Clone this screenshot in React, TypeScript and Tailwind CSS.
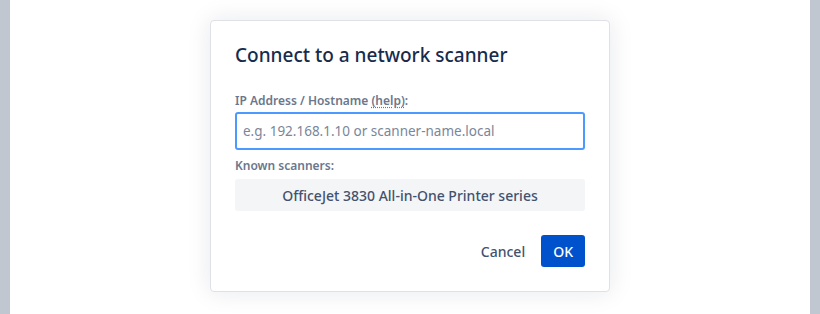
import React from "react";

const App = () => {
  return (
    <div className="flex h-[314px] w-[820px] bg-[#c1c7d0] px-[10px] font-['Noto_Sans',sans-serif]">
      <div className="flex flex-1 justify-center bg-white pt-[20px]">
        <div className="flex h-[272px] w-[400px] flex-col rounded-[4px] border border-[#dfe1e6] bg-white px-[24px] pt-[18px] shadow-[0_0_24px_rgba(9,30,66,0.10)]">
          <h2 className="text-[19px] font-medium leading-[32px] text-[#172b4d]">
            Connect to a network scanner
          </h2>
          <label className="mt-[22px] text-[12px] font-semibold leading-[16px] text-[#6b778c]">
            IP Address / Hostname{" "}
            <span className="underline decoration-dotted underline-offset-2">
              (help)
            </span>
            :
          </label>
          <input
            autoFocus
            className="mt-[3px] h-[38px] w-full rounded-[3px] border-2 border-[#4c9aff] px-[6px] text-[13.5px] text-[#172b4d] outline-none placeholder:text-[#7a869a]"
            placeholder="e.g. 192.168.1.10 or scanner-name.local"
          />
          <div className="mt-[8px] text-[12px] font-semibold leading-[16px] text-[#6b778c]">
            Known scanners:
          </div>
          <button className="mt-[5px] h-[32px] w-full rounded-[3px] bg-[#f4f5f7] text-[14px] font-medium text-[#42526e]">
            OfficeJet 3830 All-in-One Printer series
          </button>
          <div className="mt-[24px] flex justify-end gap-[4px]">
            <button className="h-[32px] rounded-[3px] px-[12px] text-[14px] font-medium text-[#42526e]">
              Cancel
            </button>
            <button className="h-[32px] rounded-[3px] bg-[#0052cc] px-[12px] text-[14px] font-medium text-white">
              OK
            </button>
          </div>
        </div>
      </div>
    </div>
  );
};

export default App;
